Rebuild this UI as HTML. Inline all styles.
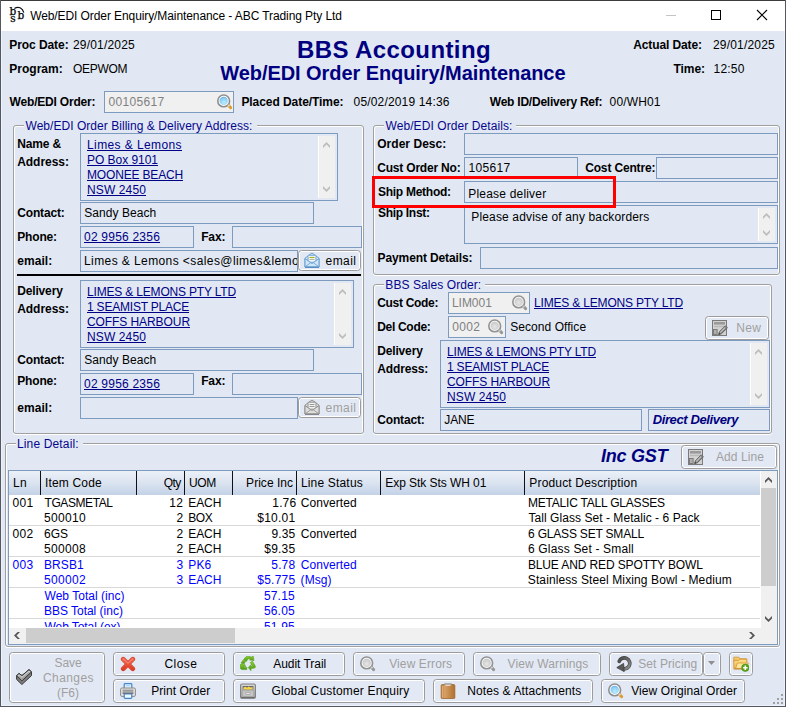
<!DOCTYPE html>
<html><head><meta charset="utf-8"><title>Web/EDI Order Enquiry/Maintenance - ABC Trading Pty Ltd</title>
<style>
*{box-sizing:border-box;margin:0;padding:0}
html,body{width:786px;height:707px;overflow:hidden;background:#e1e8f3}
body{position:relative;font:12px/14px 'Liberation Sans',sans-serif;color:#000}
.a,.x,.bx,.gb,.btn,.sb,svg.i{position:absolute}
.x{white-space:nowrap}
.t{font:normal 12px/14px 'Liberation Sans',sans-serif;color:#000}
.b{font:bold 12px/14px 'Liberation Sans',sans-serif;color:#000}
.l{font:normal 12px/14px 'Liberation Sans',sans-serif;color:#000086;text-decoration:underline}
.g{font:normal 12px/14px 'Liberation Sans',sans-serif;color:#808080}
.lg{font:normal 12px/14px 'Liberation Sans',sans-serif;color:#06068e}
.bl{font:normal 12px/14px 'Liberation Sans',sans-serif;color:#0000ff}
.dg{font:normal 12px/14px 'Liberation Sans',sans-serif;color:#a0a0a0}
.title{font:normal 12px/14px 'Liberation Sans',sans-serif;color:#000}
.h1{font:bold 24px/26px 'Liberation Sans',sans-serif;color:#000080}
.h2{font:bold 20px/22px 'Liberation Sans',sans-serif;color:#000080}
.bi{font:italic bold 13px/15px 'Liberation Sans',sans-serif;color:#000080}
.inc{font:italic bold 18px/20px 'Liberation Sans',sans-serif;color:#000080}
.bx{border:1px solid #7d9bbe;background:#e1e8f3}
.gy{background:#f0f0f0}
.gb{border:1px solid #a0a0a0;border-radius:3px;box-shadow:inset 1px 1px 0 #fff,inset -1px 0 0 #fff,0 1px 0 #fff}
.cut{position:absolute;background:#e1e8f3;height:3px}
.btn{border:1px solid #9c9c9c;border-radius:3.5px;background:#e3e9f4;box-shadow:inset 0 0 0 1px #fff}
.sb{background:#f0f0f0;border-left:1px solid #fff}
.hd{position:absolute;top:0;height:24px;border-right:1px solid #101018}
.rl{position:absolute;left:0;width:751px;height:1px;background:#d9d9d9}
</style></head><body>
<!-- window chrome -->
<div class="a" style="left:0;top:0;width:786px;height:31px;background:#fff"></div>
<div class="a" style="left:1px;top:31px;width:784px;height:675px;border:1px solid #edf2fa;border-top:0"></div>
<div class="a" style="left:0;top:0;width:786px;height:1px;background:#3c3c3c"></div>
<div class="a" style="left:0;top:0;width:1px;height:707px;background:#555860"></div>
<div class="a" style="left:785px;top:0;width:1px;height:707px;background:#555860"></div>
<div class="a" style="left:0;top:706px;width:786px;height:1px;background:#555860"></div>
<svg class="i" style="left:660px;top:5px" width="120" height="20" viewBox="0 0 120 20"><path d="M6 10.5h10" stroke="#c4c4c4" stroke-width="1" fill="none"/><rect x="51.5" y="5.5" width="9" height="9" fill="none" stroke="#000" stroke-width="1"/><path d="M97 5l10 10M107 5l-10 10" stroke="#000" stroke-width="1.1" fill="none"/></svg>
<!--ICON_LOGO-->

<!-- input boxes -->
<div class="bx gy" style="left:104px;top:91px;width:130px;height:22px"></div>

<!-- GB1 -->
<div class="gb" style="left:13px;top:125px;width:351px;height:309px"></div>
<div class="cut" style="left:24px;top:124px;width:233px"></div>
<div class="bx" style="left:80px;top:133px;width:258px;height:68px"></div>
<div class="sb" style="left:318px;top:136px;width:17px;height:62px"></div>
<div class="bx" style="left:80px;top:202px;width:234px;height:22px"></div>
<div class="bx" style="left:80px;top:226px;width:114px;height:22px"></div>
<div class="bx" style="left:232px;top:226px;width:130px;height:22px"></div>
<div class="bx" style="left:80px;top:250px;width:218px;height:22px;overflow:hidden"><div class="x t" style="left:3.0px;top:3.0px;letter-spacing:0.41px">Limes &amp; Lemons &lt;sales@limes&amp;lemons.com.au&gt;</div></div>
<div class="btn" style="left:298px;top:250px;width:63px;height:21px"></div>
<div class="a" style="left:17px;top:274px;width:344px;height:2px;background:#000"></div>
<div class="bx" style="left:80px;top:280px;width:274px;height:68px"></div>
<div class="sb" style="left:334px;top:283px;width:17px;height:62px"></div>
<div class="bx" style="left:80px;top:349px;width:234px;height:22px"></div>
<div class="bx" style="left:80px;top:373px;width:114px;height:22px"></div>
<div class="bx" style="left:232px;top:373px;width:130px;height:22px"></div>
<div class="bx" style="left:80px;top:397px;width:218px;height:22px"></div>
<div class="btn" style="left:298px;top:397px;width:63px;height:21px"></div>

<!-- GB2 -->
<div class="gb" style="left:373px;top:125px;width:407px;height:150px"></div>
<div class="cut" style="left:384px;top:124px;width:132px"></div>
<div class="bx" style="left:464px;top:133px;width:314px;height:22px"></div>
<div class="bx" style="left:464px;top:157px;width:114px;height:22px"></div>
<div class="bx" style="left:656px;top:157px;width:122px;height:22px"></div>
<div class="bx" style="left:464px;top:181px;width:314px;height:22px"></div>
<div class="bx" style="left:464px;top:205px;width:314px;height:39px"></div>
<div class="sb" style="left:758px;top:208px;width:17px;height:33px"></div>
<div class="bx" style="left:480px;top:247px;width:298px;height:22px"></div>

<!-- GB3 -->
<div class="gb" style="left:373px;top:284px;width:399px;height:150px"></div>
<div class="cut" style="left:384px;top:283px;width:101px"></div>
<div class="bx gy" style="left:448px;top:292px;width:82px;height:22px"></div>
<div class="bx gy" style="left:448px;top:316px;width:58px;height:22px"></div>
<div class="btn" style="left:705px;top:316px;width:64px;height:24px"></div>
<div class="bx" style="left:440px;top:340px;width:330px;height:68px"></div>
<div class="sb" style="left:750px;top:343px;width:17px;height:62px"></div>
<div class="bx" style="left:440px;top:409px;width:202px;height:22px"></div>
<div class="bx" style="left:648px;top:409px;width:122px;height:22px"></div>

<!-- GB4 -->
<div class="gb" style="left:5px;top:443px;width:775px;height:204px"></div>
<div class="cut" style="left:16px;top:442px;width:67px"></div>
<div class="btn" style="left:681px;top:445px;width:96px;height:24px"></div>
<div class="a" style="left:8px;top:470px;width:770px;height:175px;background:#fff;border:1px solid #7d9bbe"></div>
<div class="a" style="left:9px;top:471px;width:751px;height:24px;background:linear-gradient(#ebf0f8 0%,#dde5f1 45%,#c3d2e7 100%)">
<div class="hd" style="left:0;width:32px"></div>
<div class="hd" style="left:32px;width:96px"></div>
<div class="hd" style="left:128px;width:48px"></div>
<div class="hd" style="left:176px;width:48px"></div>
<div class="hd" style="left:224px;width:64px"></div>
<div class="hd" style="left:288px;width:84px"></div>
<div class="hd" style="left:372px;width:144px"></div>
</div>
<div class="a" style="left:9px;top:495px;width:752px;height:133px;background:#fff"></div>
<div class="a" style="left:9px;top:495px;width:752px;height:132px;overflow:hidden">
<div class="rl" style="top:30px"></div><div class="rl" style="top:61px"></div><div class="rl" style="top:92px"></div><div class="rl" style="top:123px"></div>
<div class="x t" style="left:3.6px;top:1.0px;letter-spacing:0.32px">001</div>
<div class="x t" style="left:35.5px;top:1.0px;letter-spacing:-0.42px">TGASMETAL</div>
<div class="x t" style="left:160.3px;top:1.0px;letter-spacing:0.32px">12</div>
<div class="x t" style="left:179.3px;top:1.0px;letter-spacing:-0.09px">EACH</div>
<div class="x t" style="left:263.3px;top:1.0px;letter-spacing:0.16px">1.76</div>
<div class="x t" style="left:291.7px;top:1.0px;letter-spacing:0.07px">Converted</div>
<div class="x t" style="left:518.9px;top:1.0px;letter-spacing:-0.20px">METALIC TALL GLASSES</div>
<div class="x t" style="left:34.9px;top:16.0px;letter-spacing:0.33px">500010</div>
<div class="x t" style="left:167.4px;top:16.0px;letter-spacing:0.31px">2</div>
<div class="x t" style="left:179.3px;top:16.0px;letter-spacing:-0.45px">BOX</div>
<div class="x t" style="left:248.3px;top:16.0px;letter-spacing:0.22px">$10.01</div>
<div class="x t" style="left:519.5px;top:16.0px;letter-spacing:0.05px">Tall Glass Set - Metalic - 6 Pack</div>
<div class="x t" style="left:3.6px;top:32.0px;letter-spacing:0.32px">002</div>
<div class="x t" style="left:35.0px;top:32.0px;letter-spacing:-0.01px">6GS</div>
<div class="x t" style="left:167.4px;top:32.0px;letter-spacing:0.31px">2</div>
<div class="x t" style="left:179.3px;top:32.0px;letter-spacing:-0.09px">EACH</div>
<div class="x t" style="left:262.4px;top:32.0px;letter-spacing:0.16px">9.35</div>
<div class="x t" style="left:291.7px;top:32.0px;letter-spacing:0.07px">Converted</div>
<div class="x t" style="left:519.0px;top:32.0px;letter-spacing:-0.19px">6 GLASS SET SMALL</div>
<div class="x t" style="left:34.9px;top:47.0px;letter-spacing:0.33px">500008</div>
<div class="x t" style="left:167.4px;top:47.0px;letter-spacing:0.31px">2</div>
<div class="x t" style="left:179.3px;top:47.0px;letter-spacing:-0.09px">EACH</div>
<div class="x t" style="left:255.3px;top:47.0px;letter-spacing:0.19px">$9.35</div>
<div class="x t" style="left:519.0px;top:47.0px;letter-spacing:0.17px">6 Glass Set - Small</div>
<div class="x bl" style="left:3.6px;top:63.0px;letter-spacing:0.32px">003</div>
<div class="x bl" style="left:34.9px;top:63.0px;letter-spacing:0.13px">BRSB1</div>
<div class="x bl" style="left:167.4px;top:63.0px;letter-spacing:0.31px">3</div>
<div class="x bl" style="left:179.3px;top:63.0px;letter-spacing:0.10px">PK6</div>
<div class="x bl" style="left:262.3px;top:63.0px;letter-spacing:0.16px">5.78</div>
<div class="x bl" style="left:291.7px;top:63.0px;letter-spacing:0.07px">Converted</div>
<div class="x t" style="left:518.9px;top:63.0px;letter-spacing:-0.12px">BLUE AND RED SPOTTY BOWL</div>
<div class="x bl" style="left:34.9px;top:78.0px;letter-spacing:0.33px">500002</div>
<div class="x bl" style="left:167.4px;top:78.0px;letter-spacing:0.31px">3</div>
<div class="x bl" style="left:179.3px;top:78.0px;letter-spacing:-0.09px">EACH</div>
<div class="x bl" style="left:248.3px;top:78.0px;letter-spacing:0.22px">$5.775</div>
<div class="x bl" style="left:291.6px;top:78.0px;letter-spacing:0.07px">(Msg)</div>
<div class="x t" style="left:518.8px;top:78.0px;letter-spacing:0.11px">Stainless Steel Mixing Bowl - Medium</div>
<div class="x bl" style="left:35.5px;top:94.0px;letter-spacing:0.03px">Web Total (inc)</div>
<div class="x bl" style="left:254.9px;top:94.0px;letter-spacing:0.19px">57.15</div>
<div class="x bl" style="left:34.9px;top:109.0px;letter-spacing:-0.01px">BBS Total (inc)</div>
<div class="x bl" style="left:254.9px;top:109.0px;letter-spacing:0.19px">56.05</div>
<div class="x bl" style="left:35.5px;top:125.0px;letter-spacing:-0.07px">Web Total (ex)</div>
<div class="x bl" style="left:254.9px;top:125.0px;letter-spacing:0.19px">51.95</div>
</div>
<!-- scrollbars -->
<div class="a" style="left:761px;top:471px;width:16px;height:173px;background:#f0f0f0"></div>
<div class="a" style="left:9px;top:628px;width:752px;height:16px;background:#f0f0f0"></div>
<div class="a" style="left:761px;top:488px;width:15px;height:98px;background:#cdcdcd"></div>
<div class="a" style="left:26px;top:628px;width:209px;height:15px;background:#cdcdcd"></div>

<!-- red highlight -->
<div class="a" style="left:372px;top:176px;width:244px;height:32px;border:3px solid #fe0000"></div>

<!-- buttons -->
<div class="btn" style="left:9px;top:652px;width:96px;height:51px"></div>
<div class="btn" style="left:113px;top:652px;width:112px;height:24px"></div>
<div class="btn" style="left:113px;top:679px;width:112px;height:24px"></div>
<div class="btn" style="left:233px;top:652px;width:112px;height:24px"></div>
<div class="btn" style="left:233px;top:679px;width:192px;height:24px"></div>
<div class="btn" style="left:353px;top:652px;width:112px;height:24px"></div>
<div class="btn" style="left:433px;top:679px;width:160px;height:24px"></div>
<div class="btn" style="left:473px;top:652px;width:128px;height:24px"></div>
<div class="btn" style="left:601px;top:679px;width:144px;height:24px"></div>
<div class="btn" style="left:609px;top:652px;width:94px;height:24px"></div>
<div class="btn" style="left:703px;top:652px;width:18px;height:24px"></div>
<div class="btn" style="left:729px;top:652px;width:24px;height:24px"></div>
<svg width="0" height="0" style="position:absolute"><defs>
<radialGradient id="lens" cx="0.55" cy="0.7" r="0.8"><stop offset="0" stop-color="#b8ecfc"/><stop offset="0.6" stop-color="#8fd0f6"/><stop offset="1" stop-color="#4ea0e6"/></radialGradient>
<radialGradient id="lensg" cx="0.5" cy="0.6" r="0.8"><stop offset="0" stop-color="#e6e6e6"/><stop offset="1" stop-color="#bdbdbd"/></radialGradient>
<linearGradient id="brown" x1="0" x2="1" y1="0" y2="0"><stop offset="0" stop-color="#b87838"/><stop offset="0.25" stop-color="#d8a066"/><stop offset="1" stop-color="#b07030"/></linearGradient>
<linearGradient id="fold" x1="0" x2="0" y1="0" y2="1"><stop offset="0" stop-color="#fbe08a"/><stop offset="1" stop-color="#f0b848"/></linearGradient>
<linearGradient id="redx" x1="0" x2="0" y1="0" y2="1"><stop offset="0" stop-color="#f0694f"/><stop offset="1" stop-color="#e0402a"/></linearGradient>
<linearGradient id="grn" x1="0" x2="0" y1="0" y2="1"><stop offset="0" stop-color="#8ed030"/><stop offset="1" stop-color="#4f9a10"/></linearGradient>
<linearGradient id="gry" x1="0" x2="1" y1="0" y2="1"><stop offset="0" stop-color="#4a4a4a"/><stop offset="1" stop-color="#8e8e8e"/></linearGradient>
<linearGradient id="box" x1="0" x2="0" y1="0" y2="1"><stop offset="0" stop-color="#d8d8d8"/><stop offset="1" stop-color="#a4a4a4"/></linearGradient>
</defs></svg>
<svg class="i" style="left:217px;top:94px" width="16" height="16" viewBox="0 0 16 16"><circle cx="6.7" cy="6.9" r="5.9" fill="#fff" stroke="#8e8e8e" stroke-width="1.6"/><circle cx="6.7" cy="6.9" r="4.2" fill="url(#lens)"/><path d="M11.9 11.7L13.7 13.7" stroke="#e09a2c" stroke-width="3" stroke-linecap="round"/><path d="M11.2 10.9l1.2 1.3" stroke="#d0d0d8" stroke-width="2"/></svg>
<svg class="i" style="left:512px;top:295px" width="16" height="16" viewBox="0 0 16 16"><circle cx="6.7" cy="6.9" r="5.9" fill="#f6f6f6" stroke="#929292" stroke-width="1.6"/><circle cx="6.7" cy="6.9" r="4.2" fill="url(#lensg)"/><path d="M11.9 11.7L13.7 13.7" stroke="#989898" stroke-width="3" stroke-linecap="round"/><path d="M11.2 10.9l1.2 1.3" stroke="#c8c8c8" stroke-width="2"/></svg>
<svg class="i" style="left:488px;top:319px" width="16" height="16" viewBox="0 0 16 16"><circle cx="6.7" cy="6.9" r="5.9" fill="#f6f6f6" stroke="#929292" stroke-width="1.6"/><circle cx="6.7" cy="6.9" r="4.2" fill="url(#lensg)"/><path d="M11.9 11.7L13.7 13.7" stroke="#989898" stroke-width="3" stroke-linecap="round"/><path d="M11.2 10.9l1.2 1.3" stroke="#c8c8c8" stroke-width="2"/></svg>
<svg class="i" style="left:608px;top:683px" width="16" height="16" viewBox="0 0 16 16"><circle cx="6.7" cy="6.9" r="5.9" fill="#fff" stroke="#8e8e8e" stroke-width="1.6"/><circle cx="6.7" cy="6.9" r="4.2" fill="url(#lens)"/><path d="M11.9 11.7L13.7 13.7" stroke="#e09a2c" stroke-width="3" stroke-linecap="round"/><path d="M11.2 10.9l1.2 1.3" stroke="#d0d0d8" stroke-width="2"/></svg>
<svg class="i" style="left:360px;top:656px" width="16" height="16" viewBox="0 0 16 16"><circle cx="6.7" cy="6.9" r="5.9" fill="#f6f6f6" stroke="#929292" stroke-width="1.6"/><circle cx="6.7" cy="6.9" r="4.2" fill="url(#lensg)"/><path d="M11.9 11.7L13.7 13.7" stroke="#989898" stroke-width="3" stroke-linecap="round"/><path d="M11.2 10.9l1.2 1.3" stroke="#c8c8c8" stroke-width="2"/></svg>
<svg class="i" style="left:480px;top:656px" width="16" height="16" viewBox="0 0 16 16"><circle cx="6.7" cy="6.9" r="5.9" fill="#f6f6f6" stroke="#929292" stroke-width="1.6"/><circle cx="6.7" cy="6.9" r="4.2" fill="url(#lensg)"/><path d="M11.9 11.7L13.7 13.7" stroke="#989898" stroke-width="3" stroke-linecap="round"/><path d="M11.2 10.9l1.2 1.3" stroke="#c8c8c8" stroke-width="2"/></svg>
<svg class="i" style="left:304px;top:252px" width="16" height="16" viewBox="0 0 16 16"><path d="M1 6.2L8 1l7 5.2V15H1z" fill="#d6eafa" stroke="#6a9fd0" stroke-width="1"/><rect x="4" y="3.2" width="8" height="7" rx="1" fill="#f4f8fc" stroke="#6a9fd0" stroke-width="1"/><path d="M5.5 5.5h5" stroke="#a8b020" stroke-width="1.2"/><path d="M5.5 7.5h5" stroke="#b0b8a0" stroke-width="1"/><path d="M1 6.5l7 5 7-5V15H1z" fill="#cfe5f8" stroke="#6a9fd0" stroke-width="1" stroke-linejoin="round"/><path d="M1.5 14.5L7 10.5M14.5 14.5L9 10.5" stroke="#7fb0dc" stroke-width="1" fill="none"/><path d="M1 15.2h14" stroke="#4a86c0" stroke-width="1.2"/></svg>
<svg class="i" style="left:304px;top:399px" width="16" height="16" viewBox="0 0 16 16"><path d="M1 6.2L8 1l7 5.2V15H1z" fill="#e4e4e4" stroke="#8e8e8e" stroke-width="1"/><rect x="4" y="3.2" width="8" height="7" rx="1" fill="#f2f2f2" stroke="#8e8e8e" stroke-width="1"/><path d="M5.5 5.5h5M5.5 7.5h5" stroke="#9a9a9a" stroke-width="1.1"/><path d="M1 6.5l7 5 7-5V15H1z" fill="#dedede" stroke="#8e8e8e" stroke-width="1" stroke-linejoin="round"/><path d="M1.5 14.5L7 10.5M14.5 14.5L9 10.5" stroke="#a0a0a0" stroke-width="1" fill="none"/><path d="M1 15.2h14" stroke="#808080" stroke-width="1.2"/></svg>
<svg class="i" style="left:712px;top:320px" width="16" height="16" viewBox="0 0 16 16"><rect x="0.5" y="0.5" width="14" height="15" fill="#d2d2d2" stroke="#7a7a7a"/><rect x="2" y="2" width="11" height="2.6" fill="#9a9a9a"/><rect x="2" y="5.8" width="11" height="1.4" fill="#b8b8b8"/><rect x="1.5" y="9.5" width="3.6" height="5" fill="#b0b0b0" stroke="#7a7a7a" stroke-width="1"/><path d="M6.6 14.6l0.9-2.9 5.9-5.9 2 2-5.9 5.9z" fill="#8c8c8c" stroke="#5c5c5c" stroke-width="0.9" stroke-linejoin="round"/><path d="M8.2 12.4l4.9-4.9" stroke="#e4e4e4" stroke-width="0.9"/><path d="M6.5 14.7l0.7-2 1.3 1.3z" fill="#3c3c3c"/></svg>
<svg class="i" style="left:688px;top:449px" width="16" height="16" viewBox="0 0 16 16"><rect x="0.5" y="0.5" width="14" height="15" fill="#d2d2d2" stroke="#7a7a7a"/><rect x="2" y="2" width="11" height="2.6" fill="#9a9a9a"/><rect x="2" y="5.8" width="11" height="1.4" fill="#b8b8b8"/><rect x="1.5" y="9.5" width="3.6" height="5" fill="#b0b0b0" stroke="#7a7a7a" stroke-width="1"/><path d="M6.6 14.6l0.9-2.9 5.9-5.9 2 2-5.9 5.9z" fill="#8c8c8c" stroke="#5c5c5c" stroke-width="0.9" stroke-linejoin="round"/><path d="M8.2 12.4l4.9-4.9" stroke="#e4e4e4" stroke-width="0.9"/><path d="M6.5 14.7l0.7-2 1.3 1.3z" fill="#3c3c3c"/></svg>
<svg class="i" style="left:16px;top:669px" width="16" height="16" viewBox="0 0 16 16"><path d="M0.6 6.8L2.9 4.4 6 6.6 13 0.6 15.5 2.9V6.6L5.9 15.5 0.6 10.4z" fill="#7c7c7c" stroke="#3a3a3a" stroke-width="1" stroke-linejoin="round"/><path d="M0.6 6.8L2.9 4.4 6 6.6 13 0.6 15.5 2.9 5.9 11.9z" fill="#a4a4a4" stroke="#3a3a3a" stroke-width="1" stroke-linejoin="round"/><path d="M2.2 6.7L3 5.9 6 8.2 13 2.2 13.9 3" fill="none" stroke="#d8d8d8" stroke-width="0.9"/></svg>
<svg class="i" style="left:120px;top:656px" width="16" height="16" viewBox="0 0 16 16"><path d="M3.2 3.2l9.6 9.6M12.8 3.2l-9.6 9.6" stroke="#d63c26" stroke-width="4.6" stroke-linecap="round"/><path d="M3.2 3.2l9.6 9.6M12.8 3.2l-9.6 9.6" stroke="url(#redx)" stroke-width="3.4" stroke-linecap="round"/><path d="M3.4 3l4.6 4.4L12.6 3" stroke="#f79a86" stroke-width="0.9" fill="none" stroke-linecap="round"/></svg>
<svg class="i" style="left:120px;top:683px" width="16" height="16" viewBox="0 0 16 16"><rect x="4.2" y="0.6" width="7.6" height="6" rx="0.8" fill="#eaf4fd" stroke="#3f86cc" stroke-width="1.2"/><path d="M5.8 2.8h4.4" stroke="#a9d0f2" stroke-width="1.2"/><rect x="0.6" y="5" width="14.8" height="8.4" rx="1.2" fill="#e2e2e2" stroke="#8a8a8a" stroke-width="1"/><rect x="2.6" y="6.6" width="10.8" height="2.2" fill="#9a9a9a"/><rect x="2.6" y="9.4" width="10.8" height="1.6" fill="#6e6e6e"/><rect x="4.2" y="11" width="7.6" height="4.4" rx="0.8" fill="#f4f9fe" stroke="#3f86cc" stroke-width="1.2"/></svg>
<svg class="i" style="left:240px;top:656px" width="16" height="16" viewBox="0 0 16 16"><g fill="url(#grn)" stroke="#4a9410" stroke-width="0.5" stroke-linejoin="round"><path d="M3.6 3.6L5.8 0.9Q6.8 0 8.4 0.3L11.6 0.9 13.2 0 14 4.6 9.4 3.9 11 3 8.2 2.7 6.3 5.4z"/><path d="M12.4 5.2l2.8 4.6Q15.8 11 14.8 12L11 12.5v2.2L8.2 11.6 11 8.7v1.7l1.6-0.2-2.4-3.8z"/><path d="M0.3 8.6L4.2 7.2 5.8 11 4.4 10.2 3.7 11.4H6.8V13.6H2Q0.6 13.4 0.3 12z"/><path d="M1 7.2L3.1 3.9 5.7 5.5 4.2 7.2z"/></g></svg>
<svg class="i" style="left:240px;top:683px" width="16" height="16" viewBox="0 0 16 16"><rect x="0.6" y="1" width="14.8" height="14.2" rx="1.4" fill="url(#box)" stroke="#7e7e7e" stroke-width="1.1"/><rect x="2.6" y="3" width="10.8" height="3.6" fill="#6a6a6a"/><path d="M3.4 6.4V4.6l2-0.8 1.6 1 1.6-1.2 2 1 2-0.6v2.4z" fill="#f7d54a"/><rect x="2.2" y="7.2" width="11.6" height="6.4" fill="#c4c4c4" stroke="#9a9a9a" stroke-width="0.6"/><rect x="5.8" y="9.4" width="4.4" height="2" rx="0.6" fill="#ececec" stroke="#8a8a8a" stroke-width="0.6"/><path d="M0.8 14.6h14.4" stroke="#6e6e6e" stroke-width="1.2"/></svg>
<svg class="i" style="left:440px;top:683px" width="16" height="16" viewBox="0 0 16 16"><rect x="1.2" y="1.6" width="13.6" height="14" rx="1" fill="url(#brown)" stroke="#a06828" stroke-width="0.9"/><path d="M5 2.4V0.9h6v1.5" fill="none" stroke="#9a9a9a" stroke-width="1.1"/><path d="M5.4 2.2h5.2" stroke="#e8e8e8" stroke-width="1.2"/><path d="M2.4 3v11.6" stroke="#e2b27c" stroke-width="1"/></svg>
<svg class="i" style="left:616px;top:656px" width="16" height="16" viewBox="0 0 16 16"><path d="M3.2 5.4C4.4 2.4 7.6 1 10.6 2.4c3 1.4 4 5 2.4 7.8-1.2 2-3.2 2.8-5.4 2.6" fill="none" stroke="#3e3e3e" stroke-width="3.6" stroke-linecap="round"/><path d="M3.2 5.4C4.4 2.4 7.6 1 10.6 2.4c3 1.4 4 5 2.4 7.8-1.2 2-3.2 2.8-5.4 2.6" fill="none" stroke="url(#gry)" stroke-width="2.4" stroke-linecap="round"/><path d="M7.6 7.4l0.6 8.2L0.8 11.6z" fill="#5a5a5a" stroke="#3a3a3a" stroke-width="0.8" stroke-linejoin="round"/></svg>
<svg class="i" style="left:733px;top:656px" width="16" height="16" viewBox="0 0 16 16"><path d="M0.8 1.2h5l1.2 1.6h6.6v3H0.8z" fill="#f3c969" stroke="#d59638" stroke-width="0.9"/><path d="M0.8 12.6V4.4h4.6l1.4-1.2h7v9.4z" fill="url(#fold)" stroke="#d59638" stroke-width="0.9" stroke-linejoin="round"/><path d="M2.6 12.4L4.4 7h11l-1.8 5.6z" fill="#fbe6a0" stroke="#d59638" stroke-width="0.8" stroke-linejoin="round"/><path d="M0.8 13h12.6" stroke="#c88a30" stroke-width="1"/><circle cx="12.3" cy="11.8" r="3.7" fill="#5aa818" stroke="#478a10" stroke-width="0.6"/><path d="M12.3 9.6v4.4M10.1 11.8h4.4" stroke="#fff" stroke-width="1.5"/></svg>
<svg class="i" style="left:708px;top:661px" width="7" height="4" viewBox="0 0 7 4"><path d="M0 0h7L3.5 4z" fill="#8e8e8e"/></svg>
<svg class="i" style="left:773px;top:694px" width="10" height="10" viewBox="0 0 10 10"><rect x="8" y="0" width="2" height="2" fill="#a0a0a0"/><rect x="4" y="4" width="2" height="2" fill="#a0a0a0"/><rect x="8" y="4" width="2" height="2" fill="#a0a0a0"/><rect x="0" y="8" width="2" height="2" fill="#a0a0a0"/><rect x="4" y="8" width="2" height="2" fill="#a0a0a0"/><rect x="8" y="8" width="2" height="2" fill="#a0a0a0"/></svg>
<svg class="i" style="left:8px;top:5px" width="20" height="20" viewBox="0 0 20 20"><path d="M6.4 3.6C10.2 0.8 14.6 2.8 15.8 7.6" fill="none" stroke="#111" stroke-width="1.25"/><text x="1.6" y="9.8" font-family="'DejaVu Serif','Liberation Serif',serif" font-size="10.5" fill="#000" stroke="#000" stroke-width="0.25">b</text><text x="2.2" y="16.9" font-family="'DejaVu Serif','Liberation Serif',serif" font-size="10.5" fill="#000" stroke="#000" stroke-width="0.25">s</text><text x="9.6" y="13.9" font-family="'DejaVu Serif','Liberation Serif',serif" font-size="10.5" fill="#000" stroke="#000" stroke-width="0.25">b</text></svg>
<svg class="i" style="left:0;top:0;pointer-events:none" width="786" height="707" viewBox="0 0 786 707"><path d="M323 145.6L326.5 142L330 145.6L330 148L326.5 144.5L323 148z" fill="#bdbdbd"/><path d="M323 188.4L326.5 192L330 188.4L330 186L326.5 189.5L323 186z" fill="#bdbdbd"/><path d="M339 292.6L342.5 289L346 292.6L346 295L342.5 291.5L339 295z" fill="#bdbdbd"/><path d="M339 335.4L342.5 339L346 335.4L346 333L342.5 336.5L339 333z" fill="#bdbdbd"/><path d="M763 216.6L766.5 213L770 216.6L770 219L766.5 215.5L763 219z" fill="#bdbdbd"/><path d="M763 232.4L766.5 236L770 232.4L770 230L766.5 233.5L763 230z" fill="#bdbdbd"/><path d="M755 352.6L758.5 349L762 352.6L762 355L758.5 351.5L755 355z" fill="#bdbdbd"/><path d="M755 395.4L758.5 399L762 395.4L762 393L758.5 396.5L755 393z" fill="#bdbdbd"/><path d="M765 480.6L768.5 477L772 480.6L772 483L768.5 479.5L765 483z" fill="#555"/><path d="M765 618.4L768.5 622L772 618.4L772 616L768.5 619.5L765 616z" fill="#555"/><path d="M17.6 632L14 635.5L17.6 639L20 639L16.5 635.5L20 632z" fill="#555"/><path d="M751.4 632L755 635.5L751.4 639L749 639L752.5 635.5L749 632z" fill="#555"/></svg>
<div class="x title" style="left:30.2px;top:9.0px;letter-spacing:-0.09px">Web/EDI Order Enquiry/Maintenance - ABC Trading Pty Ltd</div>
<div class="x b" style="left:9.2px;top:38.0px;letter-spacing:-0.06px">Proc Date:</div>
<div class="x t" style="left:73.0px;top:38.0px;letter-spacing:0.19px">29/01/2025</div>
<div class="x b" style="left:9.2px;top:62.0px;letter-spacing:0.03px">Program:</div>
<div class="x t" style="left:73.1px;top:62.0px;letter-spacing:-0.33px">OEPWOM</div>
<div class="x b" style="left:633.2px;top:38.0px;letter-spacing:-0.11px">Actual Date:</div>
<div class="x t" style="left:713.0px;top:38.0px;letter-spacing:0.19px">29/01/2025</div>
<div class="x b" style="left:673.6px;top:62.0px;letter-spacing:-0.11px">Time:</div>
<div class="x t" style="left:713.6px;top:62.0px;letter-spacing:0.19px">12:50</div>
<div class="x h1" style="left:297.1px;top:37.0px;letter-spacing:0.39px">BBS Accounting</div>
<div class="x h2" style="left:220.3px;top:62.0px;letter-spacing:-0.07px">Web/EDI Order Enquiry/Maintenance</div>
<div class="x b" style="left:9.6px;top:95.0px;letter-spacing:-0.19px">Web/EDI Order:</div>
<div class="x g" style="left:108.6px;top:95.0px;letter-spacing:0.33px">00105617</div>
<div class="x b" style="left:241.4px;top:95.0px;letter-spacing:-0.06px">Placed Date/Time:</div>
<div class="x t" style="left:353.6px;top:95.0px;letter-spacing:0.16px">05/02/2019 14:36</div>
<div class="x b" style="left:489.8px;top:95.0px;letter-spacing:-0.23px">Web ID/Delivery Ref:</div>
<div class="x t" style="left:609.6px;top:95.0px;letter-spacing:0.14px">00/WH01</div>
<div class="x lg" style="left:25.5px;top:119.0px;letter-spacing:0.04px">Web/EDI Order Billing &amp; Delivery Address:</div>
<div class="x b" style="left:17.2px;top:137.0px;letter-spacing:-0.12px">Name &amp;</div>
<div class="x b" style="left:17.2px;top:155.0px;letter-spacing:-0.03px">Address:</div>
<div class="x l" style="left:87.0px;top:138.0px;letter-spacing:0.40px">Limes &amp; Lemons</div>
<div class="x l" style="left:87.0px;top:153.0px;letter-spacing:-0.04px">PO Box 9101</div>
<div class="x l" style="left:87.0px;top:168.0px;letter-spacing:-0.17px">MOONEE BEACH</div>
<div class="x l" style="left:87.0px;top:183.0px;letter-spacing:0.12px">NSW 2450</div>
<div class="x b" style="left:17.2px;top:206.0px;letter-spacing:-0.15px">Contact:</div>
<div class="x t" style="left:84.2px;top:206.0px;letter-spacing:0.06px">Sandy Beach</div>
<div class="x b" style="left:17.2px;top:230.0px;letter-spacing:-0.15px">Phone:</div>
<div class="x l" style="left:84.0px;top:230.0px;letter-spacing:0.22px">02 9956 2356</div>
<div class="x b" style="left:201.2px;top:230.0px;letter-spacing:-0.15px">Fax:</div>
<div class="x b" style="left:17.2px;top:254.0px;letter-spacing:0.07px">email:</div>
<div class="x t" style="left:325.5px;top:254.0px;letter-spacing:0.46px">email</div>
<div class="x b" style="left:17.2px;top:284.0px;letter-spacing:-0.15px">Delivery</div>
<div class="x b" style="left:17.2px;top:302.0px;letter-spacing:-0.03px">Address:</div>
<div class="x l" style="left:87.0px;top:285.0px;letter-spacing:-0.18px">LIMES &amp; LEMONS PTY LTD</div>
<div class="x l" style="left:87.0px;top:300.0px;letter-spacing:-0.21px">1 SEAMIST PLACE</div>
<div class="x l" style="left:87.0px;top:315.0px;letter-spacing:-0.08px">COFFS HARBOUR</div>
<div class="x l" style="left:87.0px;top:330.0px;letter-spacing:0.12px">NSW 2450</div>
<div class="x b" style="left:17.2px;top:353.0px;letter-spacing:-0.15px">Contact:</div>
<div class="x t" style="left:84.2px;top:353.0px;letter-spacing:0.06px">Sandy Beach</div>
<div class="x b" style="left:17.2px;top:374.0px;letter-spacing:-0.15px">Phone:</div>
<div class="x l" style="left:84.0px;top:377.0px;letter-spacing:0.22px">02 9956 2356</div>
<div class="x b" style="left:201.2px;top:374.0px;letter-spacing:-0.15px">Fax:</div>
<div class="x b" style="left:17.2px;top:401.0px;letter-spacing:0.07px">email:</div>
<div class="x dg" style="left:325.5px;top:401.0px;letter-spacing:0.46px">email</div>
<div class="x lg" style="left:385.5px;top:119.0px;letter-spacing:0.08px">Web/EDI Order Details:</div>
<div class="x b" style="left:377.2px;top:137.0px;letter-spacing:0.04px">Order Desc:</div>
<div class="x b" style="left:377.2px;top:161.0px;letter-spacing:-0.19px">Cust Order No:</div>
<div class="x t" style="left:468.6px;top:161.0px;letter-spacing:0.33px">105617</div>
<div class="x b" style="left:585.2px;top:161.0px;letter-spacing:-0.16px">Cost Centre:</div>
<div class="x b" style="left:378.0px;top:185.0px;letter-spacing:-0.27px">Ship Method:</div>
<div class="x t" style="left:468.3px;top:187.0px;letter-spacing:0.19px">Please deliver</div>
<div class="x b" style="left:378.0px;top:206.0px;letter-spacing:-0.30px">Ship Inst:</div>
<div class="x t" style="left:471.3px;top:210.0px;letter-spacing:0.15px">Please advise of any backorders</div>
<div class="x b" style="left:377.6px;top:251.0px;letter-spacing:-0.12px">Payment Details:</div>
<div class="x lg" style="left:385.3px;top:278.0px;letter-spacing:0.08px">BBS Sales Order:</div>
<div class="x b" style="left:377.2px;top:296.0px;letter-spacing:-0.30px">Cust Code:</div>
<div class="x g" style="left:451.9px;top:296.0px;letter-spacing:-0.01px">LIM001</div>
<div class="x l" style="left:534.0px;top:296.0px;letter-spacing:-0.18px">LIMES &amp; LEMONS PTY LTD</div>
<div class="x b" style="left:377.2px;top:320.0px;letter-spacing:-0.30px">Del Code:</div>
<div class="x g" style="left:452.2px;top:320.0px;letter-spacing:0.32px">0002</div>
<div class="x t" style="left:510.2px;top:320.0px;letter-spacing:0.06px">Second Office</div>
<div class="x dg" style="left:736.3px;top:321.0px;letter-spacing:0.33px">New</div>
<div class="x b" style="left:377.2px;top:344.0px;letter-spacing:-0.15px">Delivery</div>
<div class="x b" style="left:377.2px;top:362.0px;letter-spacing:-0.12px">Address:</div>
<div class="x l" style="left:447.0px;top:345.0px;letter-spacing:-0.18px">LIMES &amp; LEMONS PTY LTD</div>
<div class="x l" style="left:447.0px;top:360.0px;letter-spacing:-0.21px">1 SEAMIST PLACE</div>
<div class="x l" style="left:447.0px;top:375.0px;letter-spacing:-0.08px">COFFS HARBOUR</div>
<div class="x l" style="left:447.0px;top:390.0px;letter-spacing:0.12px">NSW 2450</div>
<div class="x b" style="left:377.2px;top:413.0px;letter-spacing:-0.15px">Contact:</div>
<div class="x t" style="left:444.3px;top:413.0px;letter-spacing:-0.17px">JANE</div>
<div class="x bi" style="left:652.7px;top:412.0px;letter-spacing:-0.38px">Direct Delivery</div>
<div class="x lg" style="left:16.9px;top:437.0px;letter-spacing:0.16px">Line Detail:</div>
<div class="x inc" style="left:601.0px;top:446.0px;letter-spacing:-0.23px">Inc GST</div>
<div class="x dg" style="left:716.0px;top:450.0px;letter-spacing:0.08px">Add Line</div>
<div class="x t" style="left:12.9px;top:476.0px;letter-spacing:0.32px">Ln</div>
<div class="x t" style="left:44.9px;top:476.0px;letter-spacing:0.18px">Item Code</div>
<div class="x t" style="left:163.8px;top:476.0px;letter-spacing:-0.56px">Qty</div>
<div class="x t" style="left:188.9px;top:476.0px;letter-spacing:-0.33px">UOM</div>
<div class="x t" style="left:246.1px;top:476.0px;letter-spacing:0.03px">Price Inc</div>
<div class="x t" style="left:300.9px;top:476.0px;letter-spacing:0.18px">Line Status</div>
<div class="x t" style="left:385.3px;top:476.0px;letter-spacing:-0.06px">Exp Stk Sts WH 01</div>
<div class="x t" style="left:529.3px;top:476.0px;letter-spacing:0.17px">Product Description</div>
<div class="x dg" style="left:54.5px;top:656.0px;letter-spacing:-0.09px">Save</div>
<div class="x dg" style="left:43.0px;top:671.0px;letter-spacing:0.42px">Changes</div>
<div class="x dg" style="left:56.9px;top:686.0px;letter-spacing:0.00px">(F6)</div>
<div class="x t" style="left:164.4px;top:657.0px;letter-spacing:0.46px">Close</div>
<div class="x t" style="left:151.3px;top:684.0px;letter-spacing:0.03px">Print Order</div>
<div class="x t" style="left:273.2px;top:657.0px;letter-spacing:-0.03px">Audit Trail</div>
<div class="x dg" style="left:389.2px;top:657.0px;letter-spacing:0.11px">View Errors</div>
<div class="x t" style="left:271.4px;top:684.0px;letter-spacing:0.17px">Global Customer Enquiry</div>
<div class="x t" style="left:467.3px;top:684.0px;letter-spacing:0.10px">Notes &amp; Attachments</div>
<div class="x dg" style="left:507.5px;top:657.0px;letter-spacing:0.12px">View Warnings</div>
<div class="x dg" style="left:638.2px;top:657.0px;letter-spacing:0.09px">Set Pricing</div>
<div class="x t" style="left:631.2px;top:684.0px;letter-spacing:0.08px">View Original Order</div>
</body></html>
